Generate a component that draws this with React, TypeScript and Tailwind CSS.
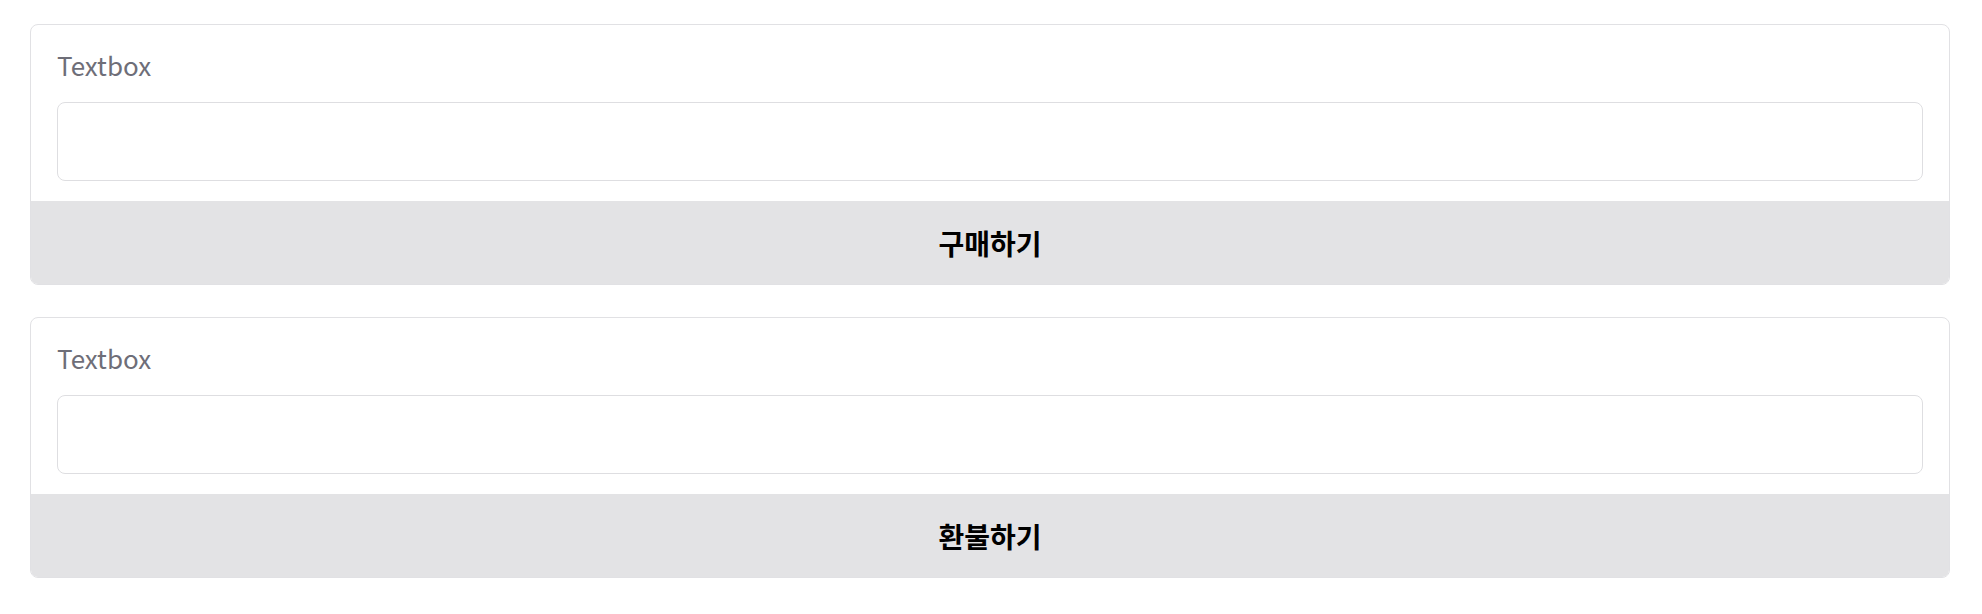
type PanelProps = {
  label: string;
  action: string;
};

function Panel(props: PanelProps) {
  const { label, action } = props;
  return (
    <div className="flex flex-col overflow-hidden rounded-[8px] border border-[#e1e1e4] bg-white">
      <div className="flex flex-col px-[26px] pt-[22px] pb-[20px]">
        <label className="text-[26px] leading-[36px] text-[#6e6e78]">{label}</label>
        <input
          type="text"
          className="mt-[19px] h-[79px] w-full rounded-[8px] border border-[#dedee1] px-4 text-[26px] focus:outline-none"
        />
      </div>
      <button className="flex h-[83px] items-center justify-center bg-[#e3e3e5] text-[28px] font-bold text-black">
        {action}
      </button>
    </div>
  );
}

export default function App() {
  return (
    <div
      className="flex min-h-screen flex-col gap-[32px] bg-white pt-[24px] pl-[30px] pr-[32px]"
      style={{ fontFamily: '"Noto Sans CJK KR", "Noto Sans", sans-serif' }}
    >
      <Panel label="Textbox" action="구매하기" />
      <Panel label="Textbox" action="환불하기" />
    </div>
  );
}
